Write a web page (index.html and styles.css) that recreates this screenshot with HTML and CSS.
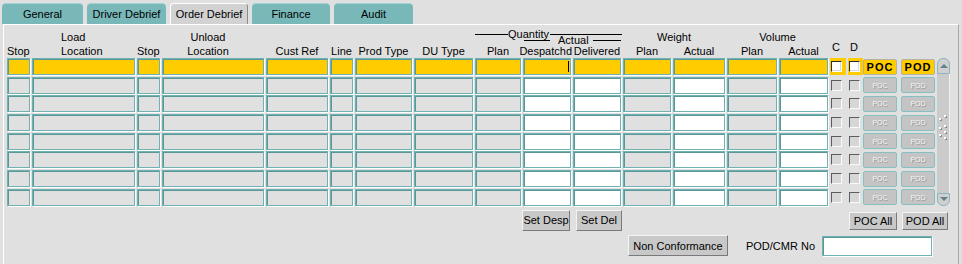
FILE: index.html
```html
<!DOCTYPE html>
<html lang="en">
<head>
    <meta charset="UTF-8">
    <title>Order Debrief</title>
    <link rel="stylesheet" href="styles.css">
</head>
<body>
<div class="tabs">
    <div class="tab tab-general">General</div>
    <div class="tab tab-driver">Driver Debrief</div>
    <div class="tab tab-order active">Order Debrief</div>
    <div class="tab tab-finance">Finance</div>
    <div class="tab tab-audit">Audit</div>
</div>

<div class="panel">
    <div class="hdr">
        <div class="top left c2">Load</div>
        <div class="top shift c4">Unload</div>
        <div class="qty">
            <div class="qty-title"><span class="rule rule-l"></span><span>Quantity</span><span class="rule rule-r"></span></div>
            <div class="act-title"><span class="rule rule-l"></span><span class="act-text">Actual</span><span class="rule rule-r"></span></div>
        </div>
        <div class="top c12">Weight</div>
        <div class="top c14">Volume</div>

        <div class="lbl left-edge">Stop</div>
        <div class="lbl left">Location</div>
        <div class="lbl left-edge">Stop</div>
        <div class="lbl shift">Location</div>
        <div class="lbl">Cust Ref</div>
        <div class="lbl">Line</div>
        <div class="lbl">Prod Type</div>
        <div class="lbl">DU Type</div>
        <div class="lbl">Plan</div>
        <div class="lbl right">Despatchd</div>
        <div class="lbl">Delivered</div>
        <div class="lbl">Plan</div>
        <div class="lbl">Actual</div>
        <div class="lbl">Plan</div>
        <div class="lbl">Actual</div>
        <div class="lbl flag">C</div>
        <div class="lbl flag">D</div>
    </div>

    <div class="table">
        <div class="records" id="records"></div>
        <div class="scroll">
            <div class="sb-btn up"><span class="arrow-up"></span></div>
            <div class="sb-track">
                <svg class="grip" width="9" height="26" viewBox="0 0 9 26">
                    <g fill="#8a8a8a">
                        <rect x="6" y="1" width="2" height="2"/><rect x="1" y="4" width="2" height="2"/>
                        <rect x="6" y="11" width="2" height="2"/><rect x="1" y="13" width="2" height="2"/>
                        <rect x="6" y="17" width="2" height="2"/><rect x="1" y="20" width="2" height="2"/>
                        <rect x="6" y="23" width="2" height="2"/>
                    </g>
                    <g fill="#fff">
                        <rect x="5" y="0" width="2" height="2"/><rect x="0" y="3" width="2" height="2"/>
                        <rect x="5" y="10" width="2" height="2"/><rect x="0" y="12" width="2" height="2"/>
                        <rect x="5" y="16" width="2" height="2"/><rect x="0" y="19" width="2" height="2"/>
                        <rect x="5" y="22" width="2" height="2"/>
                    </g>
                </svg>
            </div>
            <div class="sb-btn down"><span class="arrow-down"></span></div>
        </div>
    </div>

    <div class="actions">
        <button class="btn set-desp">Set Desp</button>
        <button class="btn set-del">Set Del</button>
        <button class="btn poc-all">POC All</button>
        <button class="btn pod-all">POD All</button>
    </div>

    <div class="form-row">
        <button class="btn non-conf">Non Conformance</button>
        <span class="form-label">POD/CMR No</span>
        <span class="fld edit pod-no"></span>
    </div>
</div>

<script>
    // f = display only field, e = editable (white) field
    const cols = ["f", "f", "f", "f", "f", "f", "f", "f", "f", "e", "e", "f", "e", "f", "e"];

    function buildRow(current) {
        let html = "";
        cols.forEach((c, i) => {
            const cls = c === "e" ? "fld edit" : "fld";
            const caret = current && i === 9 ? '<span class="caret"></span>' : "";
            html += '<div class="' + cls + '">' + caret + '</div>';
        });
        html += '<div class="chk-cell"><span class="chk"></span></div>';
        html += '<div class="chk-cell chk-d"><span class="chk"></span></div>';
        html += '<button class="rbtn poc">POC</button>';
        html += '<button class="rbtn pod">POD</button>';
        return '<div class="row' + (current ? " current" : "") + '">' + html + '</div>';
    }

    let rows = "";
    for (let i = 0; i < 8; i++) {
        rows += buildRow(i === 0);
    }
    document.getElementById("records").innerHTML = rows;
</script>
</body>
</html>
```

FILE: styles.css
```css
body {
    margin: 0;
    width: 962px;
    height: 264px;
    overflow: hidden;
    background-color: #e0e0e0;
    font-family: "Liberation Sans", Arial, sans-serif;
    font-size: 11px;
    color: #000;
}

/* tabs */

.tabs {
    display: flex;
    gap: 4px;
    height: 21px;
    padding: 3px 0 0 2px;
}

.tab {
    box-sizing: border-box;
    height: 21px;
    width: 78px;
    display: flex;
    align-items: center;
    justify-content: center;
    background-color: #78b8b8;
    border-top: 1px solid #a4d2d2;
    border-radius: 4px 4px 0 0;
}

.tab-general { width: 81px; }
.tab-driver { width: 79px; }
.tab-audit { width: 79px; }

.tab.active {
    background-color: #d2d2d2;
    border: 1px solid #fff;
    border-right-color: #8c8c8c;
    border-bottom: none;
}

/* main panel */

.panel {
    box-sizing: border-box;
    height: 240px;
    margin: 0 3px;
    padding-left: 3px;
    border-top: 1px solid #fff;
    border-left: 1px solid #fff;
    border-right: 1px solid #a8a8a8;
}

.hdr,
.row {
    display: grid;
    grid-template-columns: 25px 105px 25px 104px 64px 25px 59px 61px 48px 50px 50px 50px 54px 52px 51px 18px 15px 38px 36px;
}

.hdr {
    grid-template-rows: 19px 14px;
    line-height: 14px;
    white-space: nowrap;
}

.hdr .top {
    grid-row: 1;
    align-self: end;
    display: flex;
    justify-content: center;
    padding-right: 2px;
}

.hdr .c2 { grid-column: 2; }
.hdr .c4 { grid-column: 4; }
.hdr .c12 { grid-column: 12 / 14; }
.hdr .c14 { grid-column: 14 / 16; }

.hdr .lbl {
    grid-row: 2;
    display: flex;
    justify-content: center;
    padding-right: 2px;
}

.hdr .left {
    justify-content: flex-start;
    padding-left: 29px;
}

.hdr .left-edge {
    justify-content: flex-start;
}

.hdr .shift {
    padding-right: 12px;
}

.hdr .right {
    justify-content: flex-end;
    padding-right: 1px;
}

.hdr .lbl.flag {
    grid-row: 1 / 3;
    align-self: end;
    justify-content: flex-start;
    padding: 0 0 4px 2px;
}

.hdr .lbl.flag:nth-of-type(n) { }

.qty {
    grid-column: 9 / 12;
    grid-row: 1;
    display: flex;
    flex-direction: column;
}

.qty-title,
.act-title {
    display: flex;
    align-items: center;
    height: 13px;
    line-height: 13px;
}

.qty-title {
    margin: 3px 1px 0 0;
}

.act-title {
    margin: -7px 2px 0 49px;
}

.rule {
    height: 1px;
    background-color: #000;
}

.qty-title .rule-l { width: 33px; }
.qty-title .rule-r { flex: 1; margin-left: 1px; }
.act-title .rule-l { width: 26px; }
.act-title .rule-r { flex: 1; }

.act-text {
    margin: 0 4px 0 8px;
}

/* record rows */

.table {
    display: flex;
}

.records {
    display: flex;
    flex-direction: column;
    gap: 1.7px;
}

.row {
    height: 17px;
}

.fld {
    box-sizing: border-box;
    height: 17px;
    margin-right: 2px;
    display: flex;
    align-items: center;
    justify-content: flex-end;
    padding-right: 1px;
    background-color: #e0e0e0;
    border: 1px solid #70b2b2;
    box-shadow: inset 1px 1px 0 #5a9797, 1px 1px 0 #fff;
}

.fld.edit {
    background-color: #fff;
}

.row.current .fld {
    background-color: #ffcc00;
}

.caret {
    width: 1px;
    height: 11px;
    background-color: #000;
}

.chk-cell {
    display: flex;
    align-items: center;
    margin-right: 2px;
}

.chk-cell.chk-d {
    margin-right: 0;
}

.chk {
    box-sizing: border-box;
    width: 11px;
    height: 11px;
    margin-left: 1px;
    background-color: #d6d6d6;
    border: 1px solid;
    border-color: #5c5c5c #fafafa #fafafa #5c5c5c;
}

.row.current .chk-cell {
    background-color: #ffcc00;
}

.row.current .chk {
    background-color: #fff;
    border-color: #2c2c2c #fff #fff #2c2c2c;
    box-shadow: inset -1px -1px 0 #d8d8d8;
}

.rbtn {
    box-sizing: border-box;
    height: 16px;
    align-self: center;
    margin: 0 4px 0 0;
    padding: 0;
    font-family: "Liberation Sans", Arial, sans-serif;
    font-size: 7px;
    color: #f6f6f6;
    text-shadow: 1px 1px 0 #9a9a9a;
    background-color: #c4c4c4;
    border: 1px solid #86c0c0;
    border-radius: 2px;
}

.rbtn.pod {
    margin-right: 2px;
}

.row.current .rbtn {
    background-color: #ffcc00;
    border-color: #b4b4a4;
    color: #000;
    font-size: 11px;
    font-weight: bold;
    letter-spacing: 1px;
    text-shadow: none;
}

/* scroll bar */

.scroll {
    width: 13px;
    display: flex;
    flex-direction: column;
}

.sb-btn {
    box-sizing: border-box;
    height: 16px;
    display: flex;
    align-items: center;
    justify-content: center;
    background-color: #cfcfcf;
    border: 1px solid #8ab6bc;
}

.sb-btn.up {
    border-radius: 6px 6px 0 0;
}

.sb-btn.down {
    height: 13px;
    border-radius: 0 0 6px 6px;
}

.arrow-up,
.arrow-down {
    width: 0;
    height: 0;
    border-left: 4px solid transparent;
    border-right: 4px solid transparent;
}

.arrow-up {
    border-bottom: 4px solid #60808e;
}

.arrow-down {
    border-top: 4px solid #60808e;
}

.sb-track {
    flex: 1;
    display: flex;
    align-items: center;
    justify-content: flex-end;
    background-color: #cbcbcb;
    border-right: 1px solid #f2f2f2;
}

.grip {
    margin: -10px 1px 0 0;
}

/* buttons under the grid */

.btn {
    box-sizing: border-box;
    height: 21px;
    padding: 0;
    font-family: "Liberation Sans", Arial, sans-serif;
    font-size: 11px;
    color: #000;
    background-color: #c8c8c8;
    border: 1px solid;
    border-color: #f4f4f4 #7a7a7a #7a7a7a #f4f4f4;
}

.actions {
    display: grid;
    grid-template-columns: 25px 105px 25px 104px 64px 25px 59px 61px 48px 50px 50px 50px 54px 52px 51px 18px 15px 38px 36px 13px;
    height: 21px;
    margin-top: 4px;
}

.set-desp {
    grid-column: 10;
    width: 48px;
    margin-left: -1px;
}

.set-del {
    grid-column: 11;
    width: 46px;
    margin-left: 3px;
}

.poc-all,
.pod-all {
    height: 18px;
    margin-top: 2px;
}

.poc-all {
    grid-column: 16 / 19;
    justify-self: end;
    width: 48px;
    margin-right: 4px;
}

.pod-all {
    grid-column: 19 / 21;
    width: 46px;
    margin-left: 1px;
}

.form-row {
    display: flex;
    justify-content: flex-end;
    align-items: center;
    height: 22px;
    margin-top: 4px;
    padding-right: 26px;
}

.non-conf {
    width: 100px;
    margin-right: 18px;
}

.form-label {
    margin-right: 7px;
}

.fld.pod-no {
    width: 110px;
    height: 20px;
    margin-right: 0;
}
```
